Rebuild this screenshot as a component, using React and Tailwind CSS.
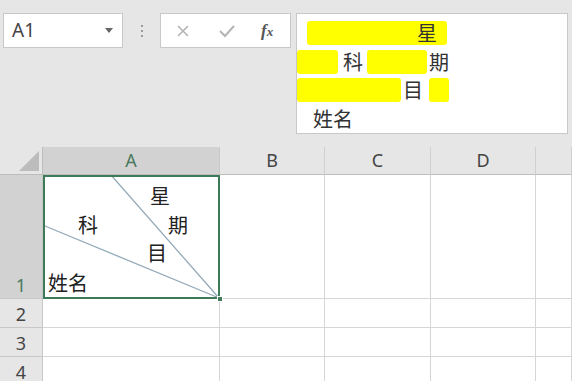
const cjk = { fontFamily: '"Noto Sans CJK SC", "Noto Sans", sans-serif' };
const ui = { fontFamily: '"Noto Sans", "Liberation Sans", sans-serif' };

const Hl = ({ w, children, className = "" }) => (
  <span className={`flex h-[24px] items-center bg-[#ffff00] rounded-[3px] ${className}`} style={{ width: w }}>
    {children}
  </span>
);

const FormulaBar = () => (
  <div className="flex h-[147px] items-start bg-[#e6e6e6] pt-[13px]">
    <div className="ml-[3px] flex h-[35px] w-[120px] items-center justify-between border border-[#c8c8c8] bg-white pl-[8px] pr-[8px]">
      <span className="text-[19px] text-[#444]" style={ui}>A1</span>
      <svg width="10" height="6" viewBox="0 0 10 6"><path d="M1 0h8L5 5z" fill="#666" /></svg>
    </div>
    <div className="flex h-[35px] w-[37px] flex-col items-center justify-center gap-[3px]">
      <span className="h-[2px] w-[2px] bg-[#9a9a9a]" />
      <span className="h-[2px] w-[2px] bg-[#9a9a9a]" />
      <span className="h-[2px] w-[2px] bg-[#9a9a9a]" />
    </div>
    <div className="flex h-[35px] w-[131px] items-center border border-[#c8c8c8] bg-white">
      <svg className="ml-[15px]" width="14" height="14" viewBox="0 0 14 14">
        <path d="M2 2l10 10M12 2L2 12" stroke="#b4b4b4" strokeWidth="1.6" fill="none" />
      </svg>
      <svg className="ml-[29px]" width="16" height="14" viewBox="0 0 16 14">
        <path d="M1 7l5 5L15 2" stroke="#b4b4b4" strokeWidth="2" fill="none" />
      </svg>
      <span className="ml-[26px] text-[17px] font-bold italic text-[#555]" style={{ fontFamily: '"Liberation Serif", serif' }}>
        f<span className="text-[13px]">x</span>
      </span>
    </div>
    <div className="ml-[5px] mr-[4px] flex h-[121px] flex-1 flex-col border border-[#c8c8c8] bg-white pt-[5px] text-[20px] leading-none text-[#333]" style={cjk}>
      <div className="flex h-[30px] items-center pl-[10px]">
        <Hl w={140} className="justify-end pr-[10px]">星</Hl>
      </div>
      <div className="flex h-[30px] items-center">
        <Hl w={41} />
        <span className="w-[29px] pl-[5px]">科</span>
        <Hl w={60} />
        <span className="pl-[2px]">期</span>
      </div>
      <div className="flex h-[30px] items-center">
        <Hl w={104} />
        <span className="w-[28px] pl-[2px]">目</span>
        <Hl w={20} />
      </div>
      <div className="flex h-[30px] items-center pl-[16px]">姓名</div>
    </div>
  </div>
);

const Corner = () => (
  <div className="flex h-full w-[43px] items-end justify-end border-r border-b border-[#bdbdbd] bg-[#e6e6e6] pb-[3px] pr-[3px]">
    <svg width="20" height="20" viewBox="0 0 20 20"><path d="M20 0V20H0z" fill="#bcbcbc" /></svg>
  </div>
);

const ColHead = ({ label, w, active }) => (
  <div
    className={`flex h-full items-center justify-center border-r border-b text-[18px] ${active ? "border-b-[#bdbdbd] bg-[#d2d2d2] text-[#4b7a5e] border-r-[#c8c8c8]" : "border-[#d0d0d0] border-b-[#bdbdbd] bg-[#e6e6e6] text-[#444]"}`}
    style={{ width: w, ...ui }}
  >
    {label}
  </div>
);

const cols = [
  { label: "A", w: 177 },
  { label: "B", w: 105 },
  { label: "C", w: 106 },
  { label: "D", w: 105 },
  { label: "", w: 36 },
];

const RowHead = ({ n, active }) => (
  <div
    className={`flex h-full w-[43px] shrink-0 items-end justify-center border-r border-b border-[#c8c8c8] text-[18px] leading-[26px] ${active ? "bg-[#d2d2d2] text-[#4b7a5e]" : "bg-[#e6e6e6] text-[#444]"}`}
    style={ui}
  >
    {n}
  </div>
);

const EmptyCells = () =>
  cols.map((c, i) => (
    <div key={i} className="h-full border-r border-b border-[#d6d6d6] bg-white" style={{ width: c.w }} />
  ));

const A1 = () => (
  <div className="relative h-full w-[177px] bg-white text-[20px] leading-none text-[#222]" style={cjk}>
    <svg className="absolute inset-0" width="177" height="124" viewBox="0 0 177 124">
      <path d="M176 123L68 0M176 123L2 51" stroke="#93aab8" strokeWidth="1.3" fill="none" />
    </svg>
    <div className="absolute inset-0 border-2 border-[#3d7a58]" />
    <span className="absolute left-[107px] top-[11px]">星</span>
    <span className="absolute left-[125px] top-[40px]">期</span>
    <span className="absolute left-[35px] top-[40px]">科</span>
    <span className="absolute left-[104px] top-[68px]">目</span>
    <span className="absolute left-[5px] top-[98px]">姓名</span>
    <span className="absolute right-[-3px] bottom-[-3px] h-[6px] w-[6px] border border-white bg-[#3d7a58]" />
  </div>
);

export default function App() {
  return (
    <div className="h-[381px] w-[572px] overflow-hidden bg-white">
      <FormulaBar />
      <div className="flex h-[28px]">
        <Corner />
        {cols.map((c, i) => (
          <ColHead key={i} label={c.label} w={c.w} active={i === 0} />
        ))}
      </div>
      <div className="flex h-[124px]">
        <RowHead n="1" active />
        <A1 />
        {cols.slice(1).map((c, i) => (
          <div key={i} className="h-full border-r border-b border-[#d6d6d6] bg-white" style={{ width: c.w }} />
        ))}
      </div>
      {["2", "3", "4"].map((n) => (
        <div key={n} className="flex h-[29px]">
          <RowHead n={n} />
          <EmptyCells />
        </div>
      ))}
    </div>
  );
}
